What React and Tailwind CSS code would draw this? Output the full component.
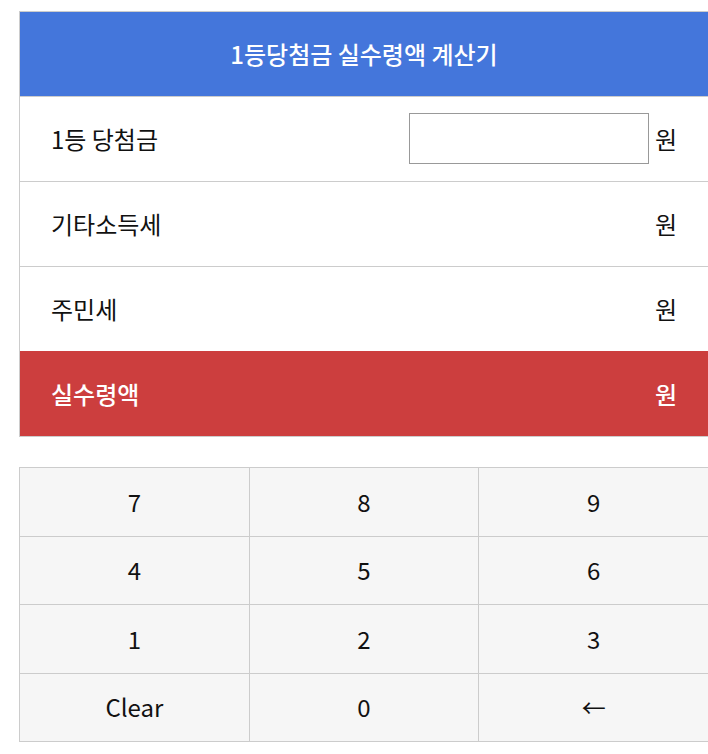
import React from 'react';

const rows = [
  { label: '1등 당첨금', input: true },
  { label: '기타소득세' },
  { label: '주민세' },
];

const keys = ['7', '8', '9', '4', '5', '6', '1', '2', '3', 'Clear', '0', '←'];

export default function App() {
  return (
    <div className="min-h-[754px] bg-white pt-[11px] pl-[19px] text-[#111] font-['Noto_Sans_CJK_KR',sans-serif]">
      <div className="w-[690px] border border-[#ccc]">
        <div className="h-[84px] bg-[#4476db] flex items-center justify-center text-white text-[24px] font-medium">
          1등당첨금 실수령액 계산기
        </div>
        {rows.map((r) => (
          <div key={r.label} className="h-[85px] border-t border-[#ccc] flex items-center px-[31px] text-[24px]">
            <span>{r.label}</span>
            <div className="ml-auto flex items-center gap-[6px]">
              {r.input && <input className="w-[240px] h-[51px] mb-[2px] border border-[#999] bg-white outline-none px-2" />}
              <span>원</span>
            </div>
          </div>
        ))}
        <div className="h-[85px] bg-[#cc3e3e] flex items-center justify-between px-[31px] text-white text-[24px] font-medium">
          <span>실수령액</span>
          <span>원</span>
        </div>
      </div>
      <div className="mt-[30px] w-[690px] grid grid-cols-3 border-t border-l border-[#ccc]">
        {keys.map((k) => (
          <button key={k} className="h-[68.5px] border-r border-b border-[#ccc] bg-[#f6f6f6] text-[24px] flex items-center justify-center">
            {k}
          </button>
        ))}
      </div>
    </div>
  );
}
